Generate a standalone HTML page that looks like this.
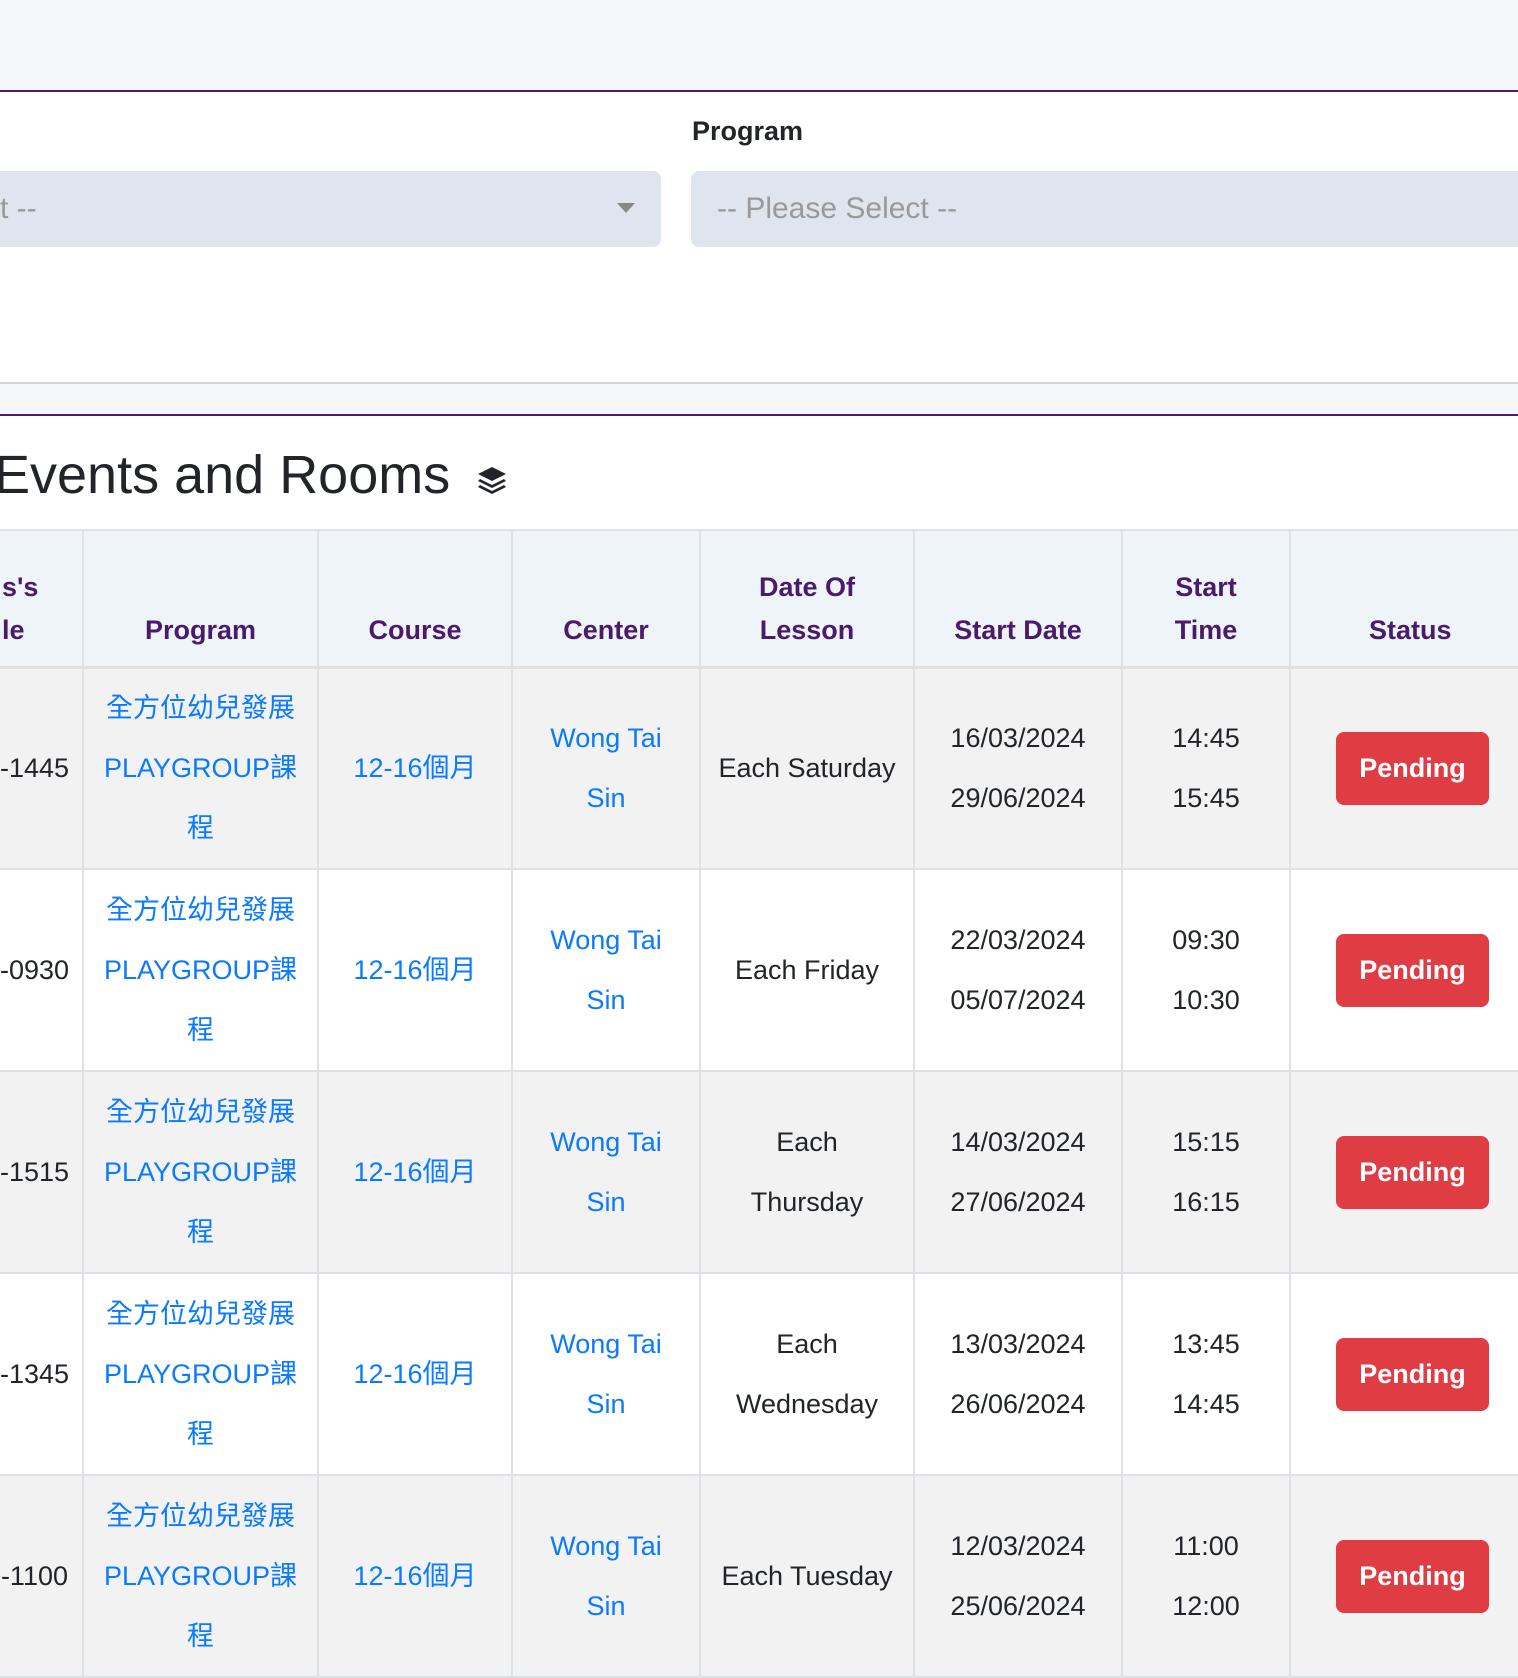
<!DOCTYPE html>
<html><head><meta charset="utf-8"><style>
*{box-sizing:border-box;margin:0;padding:0}
body{width:1518px;height:1518px;overflow:hidden;background:#fff;font-family:"Liberation Sans","Noto Sans CJK TC",sans-serif;position:relative;color:#212529}
.a{position:absolute}
table{position:absolute;left:-2px;top:529px;width:1531px;border-collapse:collapse;table-layout:fixed;font-size:27px}
td,th{border:2px solid #dee2e6;text-align:center;line-height:60px;vertical-align:middle;overflow:hidden;white-space:normal}
th{background:#eff4f9;color:#4a1a6b;font-weight:bold;line-height:43px;vertical-align:bottom;padding-bottom:14px;height:137px;border-bottom-width:3px}
td{height:202px}
tr.g td{background:#f2f2f2}
.l{color:#0a7aff}
.b{display:inline-block;background:#df3d43;color:#fff;font-weight:bold;border-radius:8px;width:153px;height:73px;line-height:73px;text-align:center}
td.f{text-align:right;padding-right:14px;white-space:nowrap}
th.f{text-align:left;padding-left:2px}
</style></head><body>
<div class="a" style="left:0;top:0;width:1518px;height:90px;background:#f4f6f9"></div>
<div class="a" style="left:0;top:90px;width:1518px;height:2px;background:#4a1a6b"></div>
<div class="a" style="left:692px;top:116px;font-size:27px;font-weight:bold;color:#212529">Program</div>
<div class="a" style="left:0;top:171px;width:661px;height:76px;background:#dee5ef;border-radius:0 8px 8px 0;color:#999;font-size:30px;line-height:76px">t --</div>
<div class="a" style="left:617px;top:203px;width:0;height:0;border-left:9px solid transparent;border-right:9px solid transparent;border-top:10px solid #888"></div>
<div class="a" style="left:691px;top:171px;width:840px;height:76px;background:#dee5ef;border-radius:8px;color:#999;font-size:30px;line-height:76px;padding-left:26px">-- Please Select --</div>
<div class="a" style="left:0;top:382px;width:1518px;height:32px;background:#f4f6f9;border-top:2px solid #d6d6d6"></div>
<div class="a" style="left:0;top:414px;width:1518px;height:2px;background:#4a1a6b"></div>
<div class="a" style="left:-6px;top:440px;font-size:54px;line-height:70px;color:#212529">Events and Rooms</div>
<svg class="a" style="left:476px;top:465px" width="32" height="32" viewBox="0 0 32 32"><path d="M16 2 L30 9 L16 16 L2 9 Z" fill="#212529"/><path d="M4 14 L16 20 L28 14 L30 16 L16 23 L2 16 Z" fill="#212529"/><path d="M4 20 L16 26 L28 20 L30 22 L16 29 L2 22 Z" fill="#212529"/></svg>
<table>
<colgroup><col style="width:84px"><col style="width:235px"><col style="width:194px"><col style="width:188px"><col style="width:214px"><col style="width:208px"><col style="width:168px"><col style="width:240px"></colgroup>
<tr><th class="f">s's<br>le</th><th>Program</th><th>Course</th><th>Center</th><th>Date Of<br>Lesson</th><th>Start Date</th><th>Start<br>Time</th><th style="text-align:left;padding-left:78px">Status</th></tr>
<tr class="g"><td class="f">-1445</td><td class="l">全方位幼兒發展<br>PLAYGROUP課<br>程</td><td class="l">12-16個月</td><td class="l">Wong Tai<br>Sin</td><td>Each Saturday</td><td>16/03/2024<br>29/06/2024</td><td>14:45<br>15:45</td><td style="text-align:left;padding-left:45px"><span class="b">Pending</span></td></tr>
<tr><td class="f">-0930</td><td class="l">全方位幼兒發展<br>PLAYGROUP課<br>程</td><td class="l">12-16個月</td><td class="l">Wong Tai<br>Sin</td><td>Each Friday</td><td>22/03/2024<br>05/07/2024</td><td>09:30<br>10:30</td><td style="text-align:left;padding-left:45px"><span class="b">Pending</span></td></tr>
<tr class="g"><td class="f">-1515</td><td class="l">全方位幼兒發展<br>PLAYGROUP課<br>程</td><td class="l">12-16個月</td><td class="l">Wong Tai<br>Sin</td><td>Each<br>Thursday</td><td>14/03/2024<br>27/06/2024</td><td>15:15<br>16:15</td><td style="text-align:left;padding-left:45px"><span class="b">Pending</span></td></tr>
<tr><td class="f">-1345</td><td class="l">全方位幼兒發展<br>PLAYGROUP課<br>程</td><td class="l">12-16個月</td><td class="l">Wong Tai<br>Sin</td><td>Each<br>Wednesday</td><td>13/03/2024<br>26/06/2024</td><td>13:45<br>14:45</td><td style="text-align:left;padding-left:45px"><span class="b">Pending</span></td></tr>
<tr class="g"><td class="f">-1100</td><td class="l">全方位幼兒發展<br>PLAYGROUP課<br>程</td><td class="l">12-16個月</td><td class="l">Wong Tai<br>Sin</td><td>Each Tuesday</td><td>12/03/2024<br>25/06/2024</td><td>11:00<br>12:00</td><td style="text-align:left;padding-left:45px"><span class="b">Pending</span></td></tr>
</table>
</body></html>
